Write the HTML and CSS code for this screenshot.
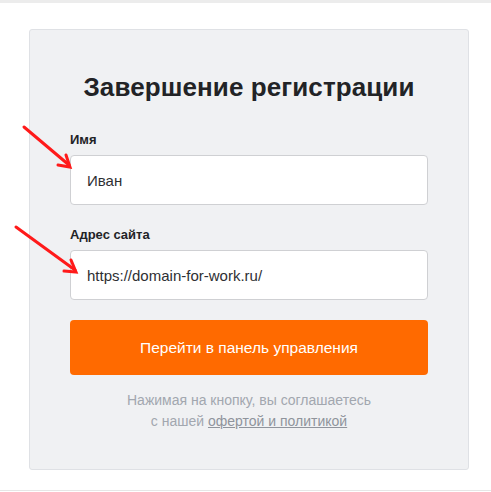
FILE: index.html
```html
<!DOCTYPE html>
<html lang="ru">
<head>
<meta charset="utf-8">
<link rel="stylesheet" href="styles.css">
</head>
<body>
<div class="topbar"></div>
<div class="page">
  <div class="card">
    <h1 class="title">Завершение регистрации</h1>
    <div class="field">
      <label class="label">Имя</label>
      <div class="input">Иван</div>
    </div>
    <div class="field">
      <label class="label">Адрес сайта</label>
      <div class="input">https://domain-for-work.ru/</div>
    </div>
    <button class="btn">Перейти в панель управления</button>
    <p class="note">Нажимая на кнопку, вы соглашаетесь<br>с нашей <a class="link" href="#">офертой и политикой</a></p>
  </div>
</div>
<div class="footer-line"></div>
<svg class="arrows" width="491" height="492" viewBox="0 0 491 492">
  <g stroke="#ff1a1a" stroke-width="3" stroke-linecap="round" fill="none">
    <line x1="24" y1="127" x2="69" y2="165"/>
    <polyline points="58,165 70,167 66,155"/>
    <line x1="16" y1="227" x2="75" y2="270"/>
    <polyline points="64,271 76,272 71,260"/>
  </g>
</svg>
</body>
</html>
```
FILE: styles.css
```css
html, body {
  margin: 0;
  padding: 0;
  background: #ffffff;
  font-family: "Liberation Sans", Arial, sans-serif;
}
body {
  position: relative;
  width: 491px;
  height: 492px;
  overflow: hidden;
}
.topbar {
  height: 3px;
  background: #ececec;
}
.page {
  padding: 26px 22px 0 29px;
}
.card {
  width: 440px;
  height: 441px;
  box-sizing: border-box;
  background: #f0f1f3;
  border: 1px solid #dfe1e5;
  border-radius: 3px;
  padding: 41px 40px 0 40px;
  display: flex;
  flex-direction: column;
}
.title {
  margin: 0 0 27px 0;
  font-size: 26px;
  line-height: 32px;
  font-weight: 700;
  color: #222326;
  text-align: center;
  letter-spacing: 0.1px;
}
.field {
  display: flex;
  flex-direction: column;
  gap: 5px;
  margin-bottom: 20px;
}
.label {
  font-size: 13px;
  line-height: 20px;
  font-weight: 700;
  color: #222326;
}
.input {
  height: 50px;
  box-sizing: border-box;
  background: #ffffff;
  border: 1px solid #cfd0d3;
  border-radius: 4px;
  padding: 0 16px;
  display: flex;
  align-items: center;
  font-size: 15px;
  color: #2e2f33;
}
.btn {
  height: 55px;
  border: none;
  border-radius: 4px;
  background: #ff6a00;
  color: #ffffff;
  font-family: "Liberation Sans", Arial, sans-serif;
  font-size: 15.5px;
}
.note {
  margin: 15px 0 0 0;
  text-align: center;
  font-size: 14px;
  line-height: 21px;
  color: #a2a7af;
}
.link {
  color: #8f949c;
  text-decoration: underline;
}
.footer-line {
  margin-top: 20px;
  border-top: 1px solid #e6e6e6;
}
.arrows {
  position: absolute;
  left: 0;
  top: 0;
  pointer-events: none;
}
```
